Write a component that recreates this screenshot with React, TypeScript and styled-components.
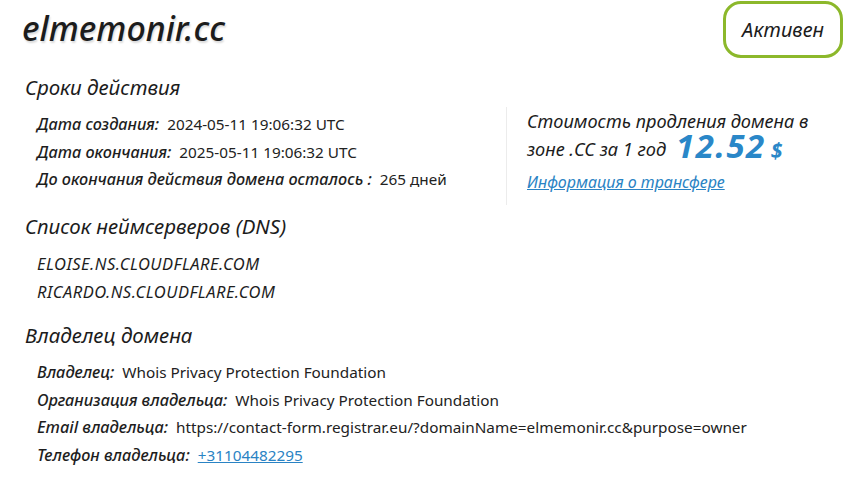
import React from 'react';
import styled, { createGlobalStyle } from 'styled-components';

const GlobalStyle = createGlobalStyle`
  html, body {
    margin: 0;
    padding: 0;
    background: #ffffff;
  }
  body {
    font-family: "Noto Sans", "Open Sans", sans-serif;
    color: #1e1e1e;
  }
`;

const Page = styled.div`
  width: 851px;
  padding: 1px 8px 0 22px;
  box-sizing: border-box;
`;

const Header = styled.div`
  display: flex;
  justify-content: space-between;
  align-items: flex-start;
`;

const Title = styled.h1`
  margin: 7px 0 0;
  font-size: 34px;
  line-height: 40px;
  font-weight: 500;
  font-style: italic;
  color: #1c1c1c;
  text-shadow: 1px 2px 2px rgba(0, 0, 0, 0.15);
`;

const StatusBadge = styled.div`
  width: 120px;
  height: 57px;
  box-sizing: border-box;
  border: 3px solid #8cb82b;
  border-radius: 18px;
  display: flex;
  align-items: center;
  justify-content: center;
  font-size: 20px;
  font-style: italic;
  color: #1c1c1c;
`;

const Columns = styled.div`
  display: flex;
  align-items: flex-start;
  margin-top: 15px;
`;

const LeftCol = styled.div`
  width: 484px;
`;

const PriceBox = styled.div`
  margin-top: 34px;
  border-left: 1px solid #ececec;
  padding: 0 0 12px 20px;
  width: 310px;
`;

const Heading = styled.h2`
  margin: 0 0 0 3px;
  font-size: 20.5px;
  font-weight: 400;
  font-style: italic;
  line-height: 28px;
  color: #1c1c1c;
`;

const Section = styled.section<{ $gap?: number }>`
  margin-top: ${p => p.$gap ?? 0}px;
`;

const List = styled.div`
  padding: 10px 0 0 15px;
`;

const Row = styled.div`
  font-size: 15.3px;
  line-height: 27.5px;
  white-space: nowrap;
`;

const Label = styled.span`
  font-style: italic;
  font-weight: 500;
  font-size: 16.3px;
  margin-right: 8px;
`;

const Value = styled.span`
  font-weight: 400;
  color: #222;
`;

const NsRow = styled.div`
  font-size: 16.5px;
  font-style: italic;
  line-height: 28px;
  letter-spacing: 0.5px;
`;

const Link = styled.a`
  color: #2a83c4;
  text-decoration: underline;
`;

const PriceText = styled.div`
  font-size: 18.2px;
  font-style: italic;
  line-height: 28px;
  color: #1c1c1c;
  white-space: nowrap;
`;

const Amount = styled.span`
  font-size: 33px;
  line-height: 20px;
  font-weight: 700;
  font-style: italic;
  color: #2a87c8;
  margin-left: 10px;
  letter-spacing: 1.5px;
  vertical-align: -2px;
`;

const Currency = styled.span`
  font-size: 21px;
  line-height: 20px;
  font-weight: 700;
  font-style: italic;
  color: #2a87c8;
  margin-left: 5px;
  vertical-align: -2px;
`;

const TransferLink = styled.a`
  display: block;
  margin-top: 8px;
  font-size: 16px;
  line-height: 22px;
  font-style: italic;
  color: #2a83c4;
  text-decoration: underline;
`;

const terms = [
  { label: 'Дата создания:', value: '2024-05-11 19:06:32 UTC' },
  { label: 'Дата окончания:', value: '2025-05-11 19:06:32 UTC' },
  { label: 'До окончания действия домена осталось :', value: '265 дней' },
];

const nameservers = ['ELOISE.NS.CLOUDFLARE.COM', 'RICARDO.NS.CLOUDFLARE.COM'];

const owner = [
  { label: 'Владелец:', value: 'Whois Privacy Protection Foundation' },
  { label: 'Организация владельца:', value: 'Whois Privacy Protection Foundation' },
  { label: 'Email владельца:', value: 'https://contact-form.registrar.eu/?domainName=elmemonir.cc&purpose=owner' },
];

const App = () => {
  return (
    <Page>
      <GlobalStyle />
      <Header>
        <Title>elmemonir.cc</Title>
        <StatusBadge>Активен</StatusBadge>
      </Header>

      <Columns>
        <LeftCol>
          <Section>
            <Heading>Сроки действия</Heading>
            <List>
              {terms.map((t, i) => (
                <Row key={i}>
                  <Label>{t.label}</Label>
                  <Value>{t.value}</Value>
                </Row>
              ))}
            </List>
          </Section>
        </LeftCol>
        <PriceBox>
          <PriceText>Стоимость продления домена в</PriceText>
          <PriceText>
            зоне .CC за 1 год<Amount>12.52</Amount><Currency>$</Currency>
          </PriceText>
          <TransferLink href="#">Информация о трансфере</TransferLink>
        </PriceBox>
      </Columns>

      <Section $gap={7}>
        <Heading>Список неймсерверов (DNS)</Heading>
        <List>
          {nameservers.map(ns => (
            <NsRow key={ns}>{ns}</NsRow>
          ))}
        </List>
      </Section>

      <Section $gap={15}>
        <Heading>Владелец домена</Heading>
        <List>
          {owner.map((o, i) => (
            <Row key={i}>
              <Label>{o.label}</Label>
              <Value>{o.value}</Value>
            </Row>
          ))}
          <Row>
            <Label>Телефон владельца:</Label>
            <Link href="#">+31104482295</Link>
          </Row>
        </List>
      </Section>
    </Page>
  );
};

export default App;
